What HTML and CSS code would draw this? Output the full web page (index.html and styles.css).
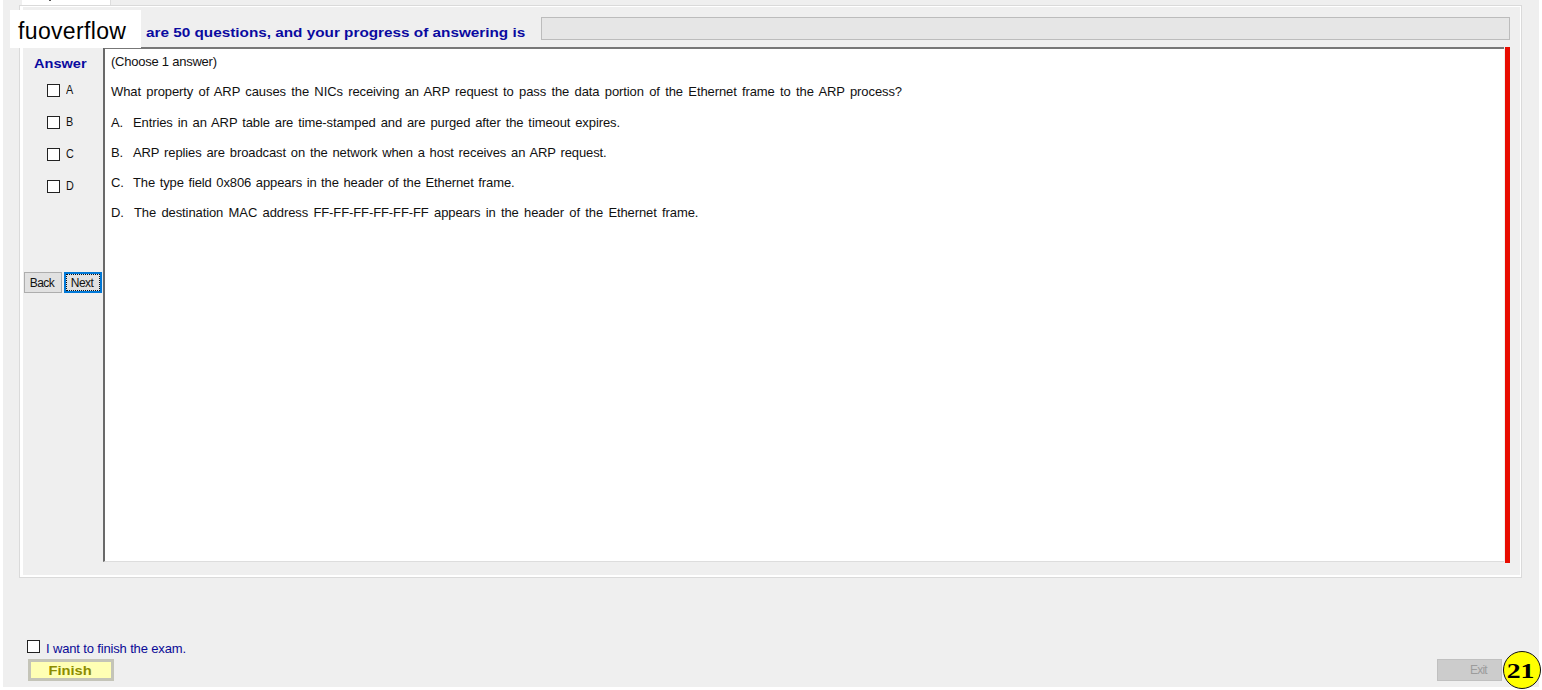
FILE: index.html
```html
<!DOCTYPE html>
<html lang="en">
<head>
  <meta charset="UTF-8">
  <title>Exam</title>
  <link rel="stylesheet" href="styles.css">
</head>
<body>
  <div class="window">
    <div class="tabs"><div class="tab"><i class="tick"></i></div></div>
    <div class="panel">
      <div class="inner">
        <div class="top">
          <h1 class="progress-text">are 50 questions, and your progress of answering is</h1>
          <div class="progress"></div>
        </div>
        <div class="main">
          <div class="side">
            <h2>Answer</h2>
            <label class="option"><i class="box"></i><span>A</span></label>
            <label class="option"><i class="box"></i><span>B</span></label>
            <label class="option"><i class="box"></i><span>C</span></label>
            <label class="option"><i class="box"></i><span>D</span></label>
            <div class="nav">
              <button class="btn">Back</button>
              <button class="btn next"><span>Next</span></button>
            </div>
          </div>
          <div class="question">
            <p class="choose">(Choose 1 answer)</p>
            <p class="ask">What property of ARP causes the NICs receiving an ARP request to pass the data portion of the Ethernet frame to the ARP process?</p>
            <p class="line"><b>A.</b><span class="a">Entries in an ARP table are time-stamped and are purged after the timeout expires.</span></p>
            <p class="line"><b>B.</b><span class="b">ARP replies are broadcast on the network when a host receives an ARP request.</span></p>
            <p class="line"><b>C.</b><span class="c">The type field 0x806 appears in the header of the Ethernet frame.</span></p>
            <p class="line"><b>D.</b><span class="d">The destination MAC address FF-FF-FF-FF-FF-FF appears in the header of the Ethernet frame.</span></p>
          </div>
          <div class="redbar"></div>
        </div>
      </div>
    </div>
    <div class="footer">
      <div class="left">
        <label class="finish-check"><i class="box"></i><span>I want to finish the exam.</span></label>
        <button class="finish"><span>Finish</span></button>
      </div>
      <button class="exit">Exit</button>
    </div>
    <div class="mark">fuoverflow</div>
    <div class="badge-bg"><div class="badge"><span>21</span></div></div>
  </div>
</body>
</html>
```
FILE: styles.css
```css
* {
  box-sizing: border-box;
}
body {
  margin: 0;
  height: 690px;
  background: #fff;
  font-family: "Liberation Sans", Arial, sans-serif;
  font-size: 12px;
  color: #111;
}
h1, h2, p {
  margin: 0;
}
button {
  font-family: inherit;
  padding: 0;
}
.window {
  position: relative;
  width: 1536px;
  height: 687px;
  margin-left: 3px;
  background: #efefef;
  white-space: nowrap;
}
.tabs {
  height: 5px;
  padding-left: 19px;
}
.tab {
  width: 89px;
  height: 6px;
  padding-left: 27px;
  background: #fff;
  border-right: 1px solid #ddd;
}
.tick {
  display: block;
  width: 2px;
  height: 1px;
  background: #555;
}
.panel {
  width: 1503px;
  height: 573px;
  margin-left: 16px;
  border: 1px solid #dadada;
  background: #fff;
  padding: 1px 1px 2px 3px;
}
.inner {
  height: 568px;
  background: #efefef;
}
.top {
  display: flex;
  height: 40px;
  padding: 10px 0 0 123px;
}
.progress-text {
  width: 395px;
  font-size: 13px;
  line-height: 16px;
  padding-top: 8px;
  transform: scaleX(1.177);
  transform-origin: left;
  color: #0a0aa0;
}
.progress {
  width: 969px;
  height: 23px;
  border: 1px solid #bcbcbc;
  background: #e6e6e6;
}
.main {
  display: flex;
  height: 516px;
}
.side {
  width: 80px;
}
.side h2 {
  font-size: 13px;
  line-height: 16px;
  margin: 9px 0 8px 11px;
  transform: scaleX(1.12);
  transform-origin: left;
  color: #0a0aa0;
}
.box {
  width: 13px;
  height: 13px;
  border: 1px solid #222;
  background: #fff;
}
.option {
  display: flex;
  height: 32px;
  padding: 4px 0 0 24px;
  gap: 6px;
  line-height: 12px;
}
.option span {
  transform: scaleX(0.9);
  transform-origin: left;
}
.nav {
  display: flex;
  gap: 2px;
  margin-top: 64px;
  padding-left: 1px;
}
.btn {
  width: 38px;
  height: 21px;
  padding-right: 2px;
  border: 1px solid #adadad;
  background: #e1e1e1;
  font-size: 12px;
  letter-spacing: -0.6px;
  color: #111;
}
.next {
  border: 2px solid #0078d7;
  padding: 0;
}
.next span {
  display: block;
  height: 17px;
  padding-right: 2px;
  line-height: 17px;
  border: 1px dotted #111;
}
.question {
  width: 1401px;
  height: 515px;
  padding: 5px 0 0 6px;
  border-left: 2px solid #696969;
  border-top: 2px solid #777;
  border-bottom: 1px solid #ddd;
  background: #fff;
  font-size: 13px;
  letter-spacing: -0.1px;
}
.question p {
  height: 30px;
  line-height: 16px;
}
.question .choose {
  letter-spacing: -0.24px;
}
.question .ask {
  height: 31px;
  word-spacing: 1.83px;
}
.line {
  display: flex;
}
.line b {
  width: 22px;
  font-weight: normal;
}
.a {
  word-spacing: 1.42px;
}
.b {
  word-spacing: 1.32px;
}
.c {
  word-spacing: 1.05px;
}
.d {
  padding-left: 1px;
  word-spacing: 1.84px;
}
.redbar {
  width: 5px;
  height: 516px;
  margin-left: 1px;
  background: #e80c00;
}
.footer {
  display: flex;
  justify-content: space-between;
  padding: 62px 37px 0 24px;
}
.finish-check {
  display: flex;
  gap: 6px;
  color: #0a0a96;
  font-size: 13px;
  line-height: 17px;
  letter-spacing: -0.15px;
}
.finish {
  display: block;
  width: 86px;
  height: 22px;
  margin: 2px 0 0 1px;
  padding: 1px 2px 0 0;
  border: 3px solid #c4c4b8;
  background: #ffffb4;
  color: #8c8c00;
  font-weight: bold;
  font-size: 13px;
  line-height: 15px;
}
.finish span {
  display: inline-block;
  transform: scaleX(1.13);
}
.exit {
  width: 65px;
  height: 22px;
  margin-top: 19px;
  padding-left: 18px;
  border: 1px solid #c0c0c0;
  background: #ccc;
  color: #9c9c9c;
  font-size: 12px;
  letter-spacing: -0.8px;
}
/* label pasted over the corner of the exam window */
.mark {
  position: absolute;
  left: 7px;
  top: 10px;
  width: 131px;
  height: 38px;
  padding-left: 8px;
  background: #fff;
  color: #000;
  font-size: 23px;
  line-height: 43px;
  letter-spacing: 0.35px;
}
.badge-bg {
  position: absolute;
  left: 1499px;
  top: 650px;
  width: 40px;
  height: 40px;
}
.badge {
  width: 38px;
  height: 38px;
  margin: 1px;
  padding-right: 3px;
  border: 1px solid #111;
  border-radius: 50%;
  background: #ff0;
  color: #000;
  font: bold 21px/38px "Liberation Serif", serif;
  text-align: center;
}
.badge span {
  display: inline-block;
  transform: scaleX(1.32);
}
```
